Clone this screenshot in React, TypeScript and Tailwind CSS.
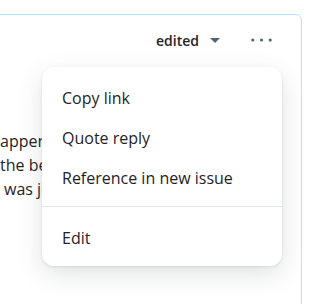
import React from "react";

export default function App() {
  return (
    <div className="relative w-[323px] h-[304px] overflow-hidden bg-white font-['Open_Sans',sans-serif] text-[#1f2328]">
      <div className="pt-[14px]">
        <div className="-ml-[20px] w-[322px] h-[400px] rounded-[6px] border border-[#b6e3ff]">
          <div className="flex h-[50px] items-center justify-end pr-[29px]">
            <div className="flex items-center gap-[11px] text-[14px] font-semibold">
              <span>edited</span>
              <svg width="10" height="5" viewBox="0 0 10 5" className="mt-[1px]">
                <path d="M0 0 L10 0 L5 5 Z" fill="#59636e" />
              </svg>
            </div>
            <svg width="21" height="4" viewBox="0 0 21 4" className="ml-[31px]">
              <circle cx="1.8" cy="2" r="1.6" fill="#59636e" />
              <circle cx="10.5" cy="2" r="1.6" fill="#59636e" />
              <circle cx="19.2" cy="2" r="1.6" fill="#59636e" />
            </svg>
          </div>
          <div className="ml-[19px] w-[43px] overflow-hidden pt-[64px] text-[16px] leading-[24px] whitespace-nowrap">
            <div>appened</div>
            <div>the best</div>
            <div className="pl-[4px]">was just</div>
          </div>
        </div>
      </div>

      <div className="absolute left-[42px] top-[67px] w-[240px] rounded-[12px] bg-white pt-[11px] pb-[8px] shadow-[0_1px_3px_rgba(31,35,40,0.10),0_8px_24px_rgba(66,74,83,0.16)]">
        <div className="flex h-[40px] items-center px-[20px] text-[16px] leading-[24px]">Copy link</div>
        <div className="flex h-[40px] items-center px-[20px] text-[16px] leading-[24px]">Quote reply</div>
        <div className="flex h-[40px] items-center px-[20px] text-[16px] leading-[24px]">Reference in new issue</div>
        <div className="mt-[8px] mb-[11px] h-px bg-[#e3e6ea]" />
        <div className="flex h-[40px] items-center px-[20px] text-[16px] leading-[24px]">Edit</div>
      </div>
    </div>
  );
}
